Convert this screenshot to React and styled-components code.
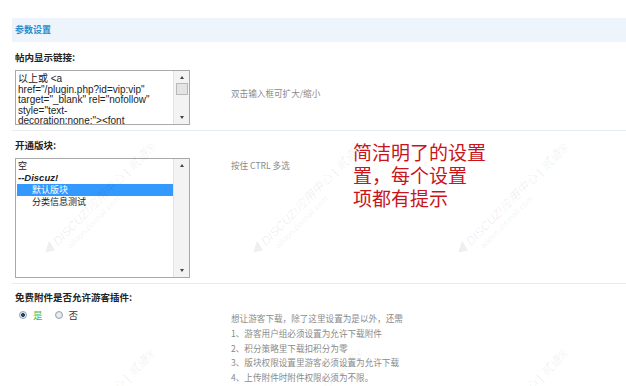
import React from 'react';
import styled, { createGlobalStyle } from 'styled-components';

const GlobalStyle = createGlobalStyle`
  html, body {
    margin: 0;
    padding: 0;
    background: #ffffff;
  }
  body {
    font-family: "Liberation Sans", "Noto Sans CJK SC", sans-serif;
    color: #333;
  }
`;

const Page = styled.div`
  position: relative;
  width: 626px;
  height: 386px;
  overflow: hidden;
  padding: 18px 0 0 12px;
  box-sizing: border-box;
`;

const Header = styled.div`
  height: 24px;
  line-height: 24px;
  background: #eef4fb;
  padding-left: 3px;
  font-family: "Noto Sans CJK SC", sans-serif;
  font-size: 9px;
  font-weight: bold;
  color: #2a8ccc;
`;

const Section = styled.div`
  padding: ${p => p.$top}px 0 ${p => p.$bottom}px 3px;
  border-bottom: ${p => (p.$last ? 'none' : '1px solid #e6edf0')};
`;

const Label = styled.div`
  font-family: "Noto Sans CJK SC", sans-serif;
  font-size: 9.5px;
  font-weight: bold;
  line-height: 14px;
  height: 14px;
  color: #222;
`;

const Row = styled.div`
  display: grid;
  grid-template-columns: 175px 1fr;
  column-gap: 41px;
  margin-top: ${p => p.$gap ?? 6}px;
  align-items: ${p => p.$align || 'start'};
`;

const Hint = styled.div`
  font-family: "Noto Sans CJK SC", sans-serif;
  font-size: 8.6px;
  color: #8a8a8a;
  line-height: 14.8px;
  padding-top: ${p => p.$pad || 0}px;
  padding-bottom: ${p => p.$padBottom || 0}px;
`;

const Box = styled.div`
  position: relative;
  height: ${p => p.$h}px;
  border: 1px solid #a9a9a9;
  box-sizing: border-box;
  background: #fff;
  display: flex;
  overflow: hidden;
`;

const BoxText = styled.div`
  flex: 1;
  padding: 3px 2px 0;
  font-family: "Liberation Sans", "Noto Sans CJK SC", sans-serif;
  font-size: 10px;
  line-height: 10.6px;
  color: #222;
  white-space: pre;
  overflow: hidden;
`;

const Scrollbar = styled.div`
  width: 15px;
  border-left: 1px solid #e2e2e2;
  background: #f3f3f3;
  display: flex;
  flex-direction: column;
  align-items: center;
  justify-content: space-between;
  position: relative;
`;

const Arrow = styled.div`
  width: 0;
  height: 0;
  margin: 5px 0;
  border-left: 2.5px solid transparent;
  border-right: 2.5px solid transparent;
  ${p => (p.$down ? 'border-top: 3px solid #444;' : 'border-bottom: 3px solid #444;')}
`;

const Thumb = styled.div`
  position: absolute;
  top: 12px;
  left: 2px;
  width: 10px;
  height: 10px;
  background: #e4e4e4;
  border: 1px solid #b8b8b8;
`;

const OptionList = styled.div`
  flex: 1;
  padding: 1px 0 0 1px;
  font-family: "Noto Sans CJK SC", sans-serif;
  font-size: 9px;
`;

const Option = styled.div`
  height: 12px;
  line-height: 12px;
  padding-left: ${p => (p.$indent ? 15 : 1)}px;
  background: ${p => (p.$selected ? '#3399ff' : 'transparent')};
  color: ${p => (p.$selected ? '#fff' : '#222')};
  font-weight: ${p => (p.$group ? 'bold' : 'normal')};
  font-style: ${p => (p.$group ? 'italic' : 'normal')};
  font-family: ${p => (p.$group ? '"Liberation Sans", sans-serif' : 'inherit')};
  font-size: ${p => (p.$group ? '9.5px' : 'inherit')};
`;

const Radios = styled.div`
  display: flex;
  align-items: center;
  height: 16px;
  padding: 3px 0 0 4px;
  font-family: "Noto Sans CJK SC", sans-serif;
  font-size: 9.5px;
  line-height: 16px;
`;

const Radio = styled.span`
  width: 6px;
  height: 6px;
  border-radius: 50%;
  border: 1px solid #9aa3ad;
  margin-right: 6px;
  background: ${p =>
    p.$on
      ? 'radial-gradient(circle, #24466e 0 1.6px, #dde4ec 2.2px)'
      : 'radial-gradient(circle, #f4f5f7 0, #d6dadf 100%)'};
`;

const RadioText = styled.span`
  color: ${p => p.$color || '#333'};
  margin-right: 12px;
`;

const Note = styled.div`
  position: absolute;
  left: 353px;
  top: 140px;
  font-family: "Noto Sans CJK SC", sans-serif;
  font-size: 19px;
  line-height: 23px;
  color: #c9141b;
`;

const Mark = styled.div`
  position: absolute;
  left: ${p => p.$x}px;
  top: ${p => p.$y}px;
  transform: rotate(-45deg);
  transform-origin: 0 0;
  color: rgba(0, 0, 0, 0.075);
  pointer-events: none;
  font-family: "Liberation Sans", "Noto Sans CJK SC", sans-serif;
  white-space: nowrap;
  line-height: 12px;
`;

const MarkTop = styled.div`
  font-size: 12px;
  font-style: italic;
`;

const MarkSub = styled.div`
  font-size: 8.5px;
  padding-left: 22px;
`;

const textareaLines = [
  '以上或 <a',
  'href="/plugin.php?id=vip:vip"',
  'target="_blank" rel="nofollow"',
  'style="text-',
  'decoration:none;"><font',
];

const marks = [
  [40, 250], [248, 250], [453, 250], [40, 456], [248, 456], [453, 456],
];

function Watermark({ x, y }) {
  return (
    <Mark $x={x} $y={y}>
      <MarkTop>◀ DISCUZ!应用中心 | 贰道®</MarkTop>
      <MarkSub>addon.dismall.com</MarkSub>
    </Mark>
  );
}

export default function App() {
  return (
    <>
      <GlobalStyle />
      <Page>
        <Header>参数设置</Header>

        <Section $top={8} $bottom={5}>
          <Label>帖内显示链接:</Label>
          <Row $align="center">
            <Box $h={55}>
              <BoxText>{textareaLines.join('\n')}</BoxText>
              <Scrollbar>
                <Arrow />
                <Thumb />
                <Arrow $down />
              </Scrollbar>
            </Box>
            <Hint $padBottom={8}>双击输入框可扩大/缩小</Hint>
          </Row>
        </Section>

        <Section $top={7} $bottom={5}>
          <Label>开通版块:</Label>
          <Row>
            <Box $h={120}>
              <OptionList>
                <Option>空</Option>
                <Option $group>--Discuz!</Option>
                <Option $indent $selected>默认版块</Option>
                <Option $indent>分类信息测试</Option>
              </OptionList>
              <Scrollbar>
                <Arrow />
                <Arrow $down />
              </Scrollbar>
            </Box>
            <Hint $pad={0}>按住 CTRL 多选</Hint>
          </Row>
        </Section>

        <Section $top={6} $bottom={0} $last>
          <Label>免费附件是否允许游客插件:</Label>
          <Row $gap={0}>
            <Radios>
              <Radio $on />
              <RadioText $color="#3cbf3c">是</RadioText>
              <Radio />
              <RadioText>否</RadioText>
            </Radios>
            <Hint $pad={7}>
              想让游客下载，除了这里设置为是以外，还需<br />
              1、游客用户组必须设置为允许下载附件<br />
              2、积分策略里下载扣积分为零<br />
              3、版块权限设置里游客必须设置为允许下载<br />
              4、上传附件时附件权限必须为不限。
            </Hint>
          </Row>
        </Section>

        <Note>
          简洁明了的设置<br />
          置，每个设置<br />
          项都有提示
        </Note>

        {marks.map(([x, y]) => (
          <Watermark key={`${x}-${y}`} x={x} y={y} />
        ))}
      </Page>
    </>
  );
}
